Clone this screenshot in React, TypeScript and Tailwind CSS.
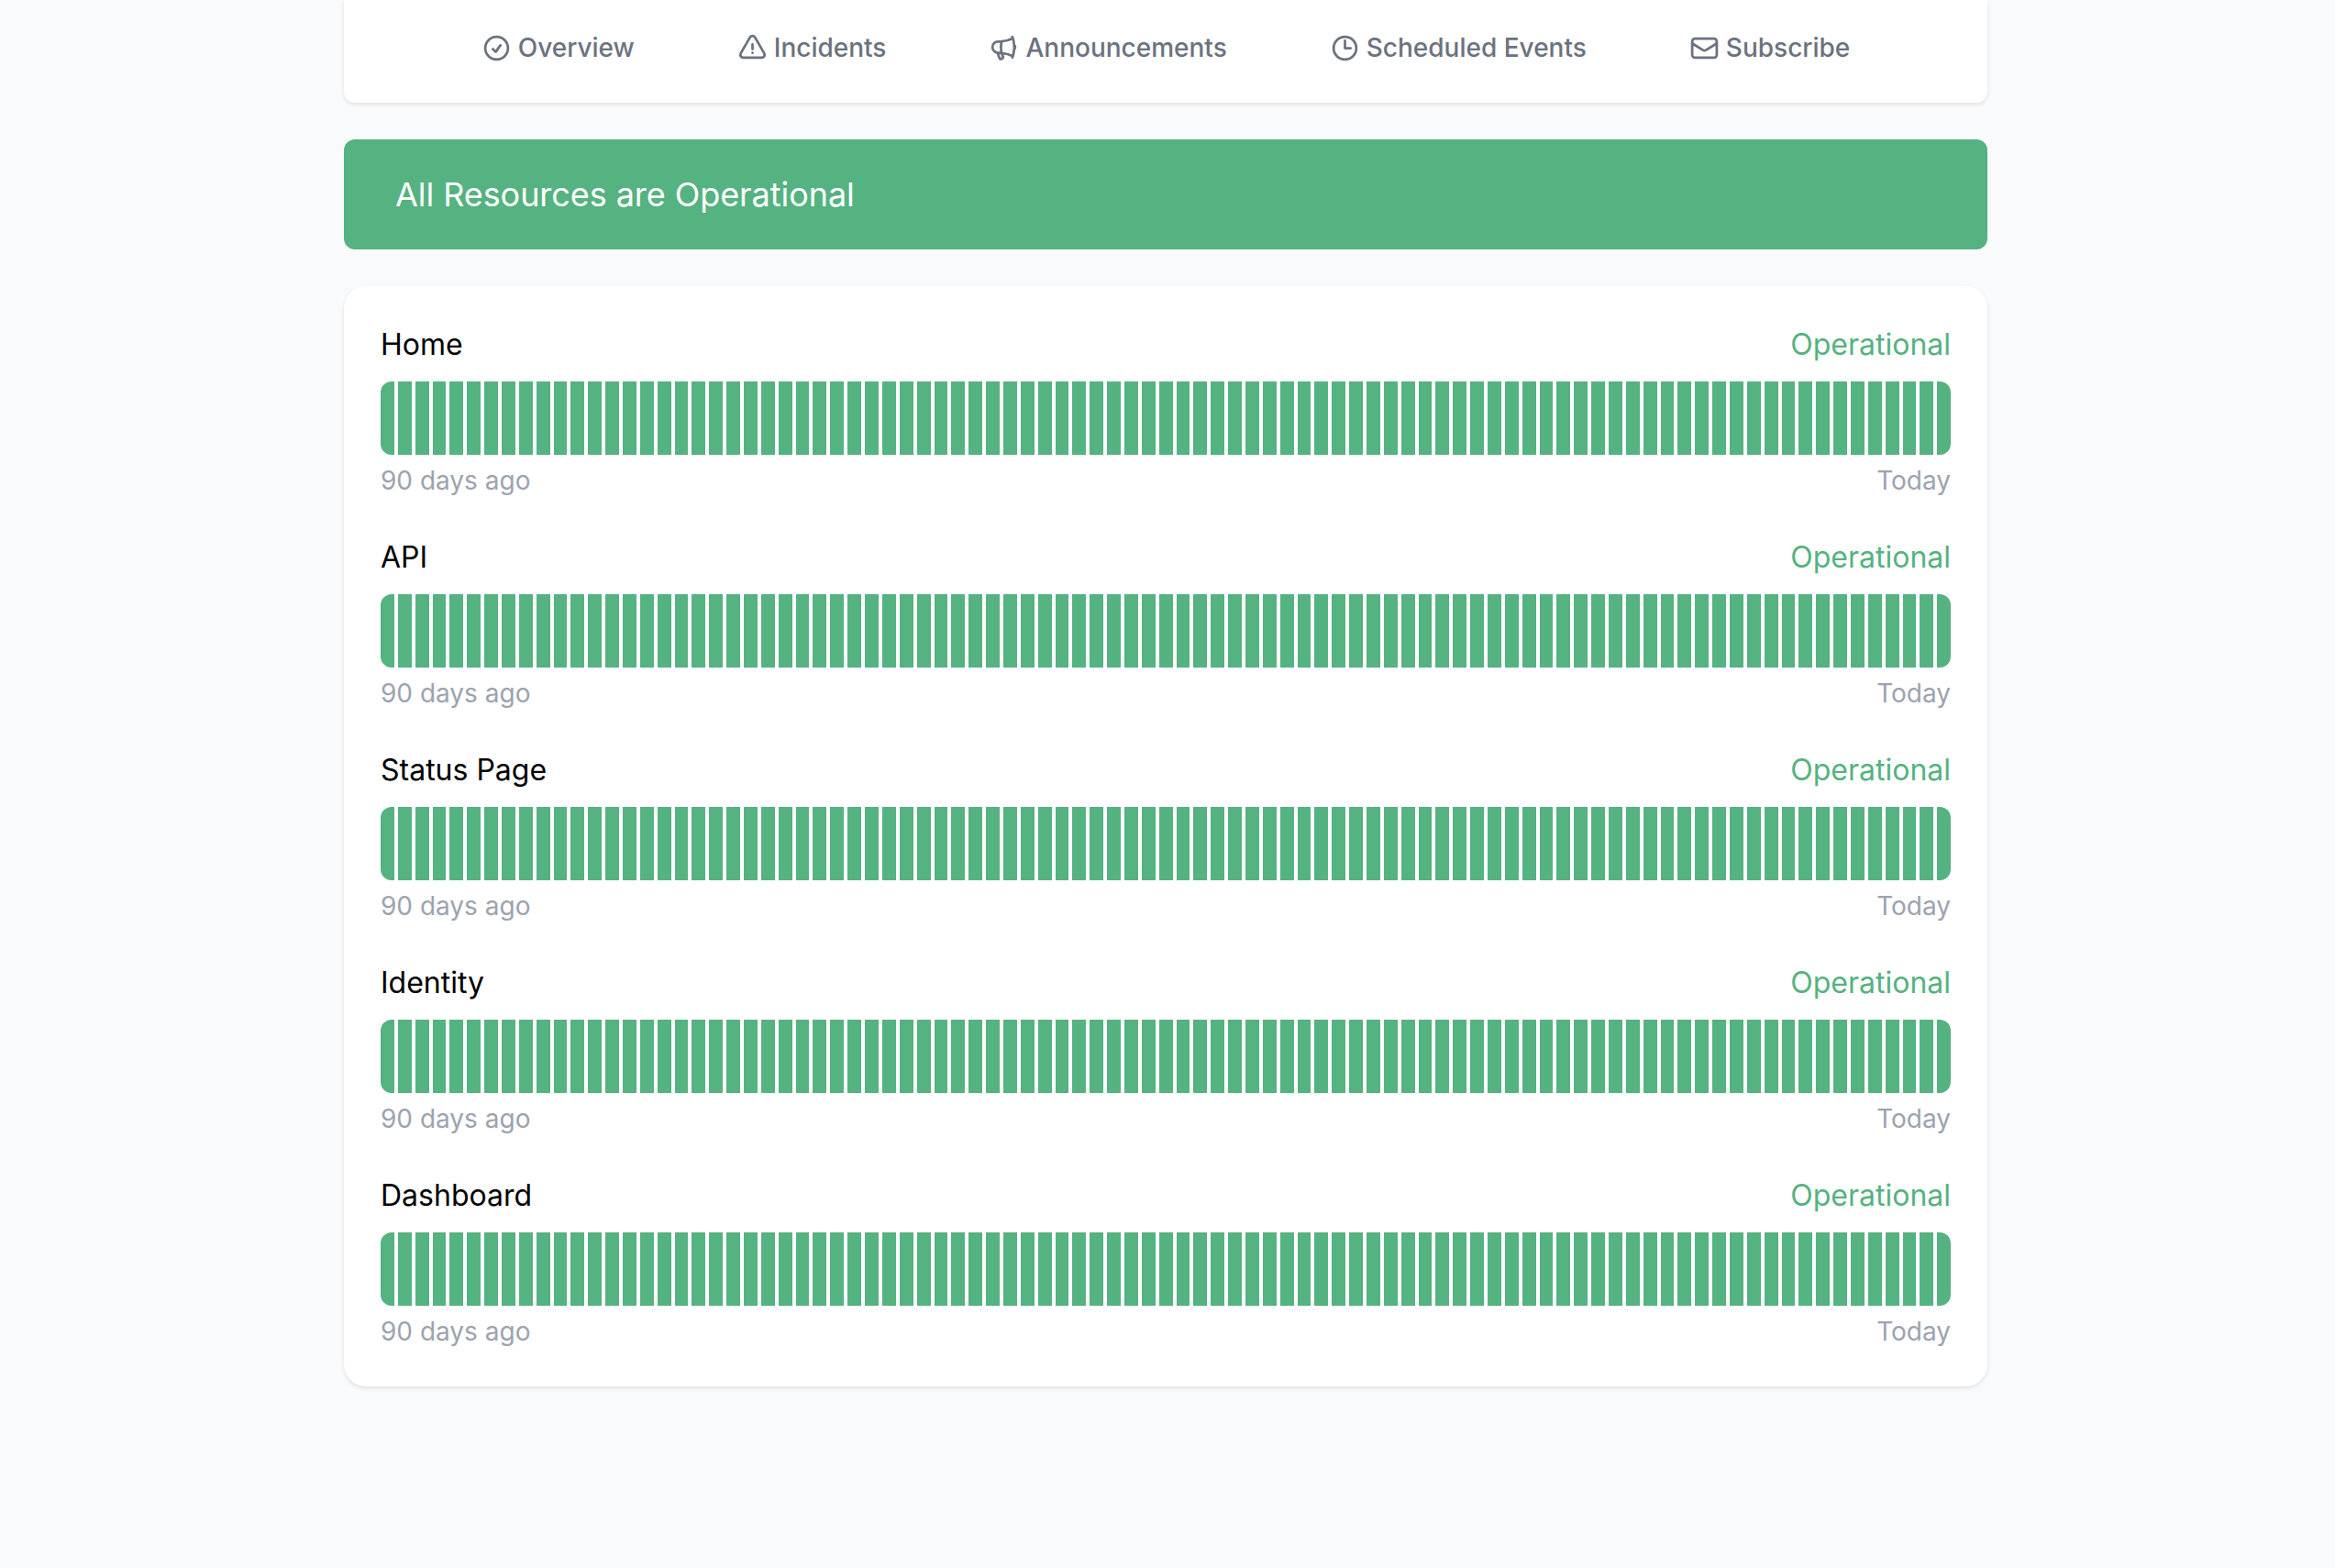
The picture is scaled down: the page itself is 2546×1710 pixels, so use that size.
import React from "react";
import {
  HiOutlineCheckCircle,
  HiOutlineExclamationTriangle,
  HiOutlineMegaphone,
  HiOutlineClock,
  HiOutlineEnvelope,
} from "react-icons/hi2";

const nav = [
  { label: "Overview", Icon: HiOutlineCheckCircle },
  { label: "Incidents", Icon: HiOutlineExclamationTriangle },
  { label: "Announcements", Icon: HiOutlineMegaphone },
  { label: "Scheduled Events", Icon: HiOutlineClock },
  { label: "Subscribe", Icon: HiOutlineEnvelope },
];

const resources = ["Home", "API", "Status Page", "Identity", "Dashboard"];
const days = Array.from({ length: 91 }, (_, i) => i);

export default function App() {
  return (
    <div className="min-h-screen bg-[#f9fafb] pr-[4px] font-['Inter',sans-serif]">
      <div className="mx-auto flex w-[1792px] flex-col gap-[40px]">
        <nav className="flex justify-center gap-[112px] rounded-b-[12px] bg-white pt-[32px] pb-[40px] shadow-[0_2px_4px_rgba(0,0,0,0.1)]">
          {nav.map(({ label, Icon }) => (
            <a
              key={label}
              className="flex items-center gap-[7px] text-[28px] leading-[40px] font-medium text-[#6b7280]"
            >
              <Icon className="h-[33px] w-[33px]" strokeWidth={2} />
              {label}
            </a>
          ))}
        </nav>
        <div className="rounded-[12px] bg-[#55b281] px-[56px] py-[32px] text-[36px] leading-[56px] tracking-[-0.06px] text-white">
          All Resources are Operational
        </div>
        <div className="flex flex-col gap-[40px] rounded-[24px] bg-white p-[40px] shadow-[0_2px_4px_rgba(0,0,0,0.1)]">
          {resources.map((name) => (
            <section key={name}>
              <div className="flex justify-between text-[32px] leading-[48px]">
                <span className="text-black">{name}</span>
                <span className="text-[#55b281]">Operational</span>
              </div>
              <div className="mt-[16px] flex h-[80px] gap-[4px] overflow-hidden rounded-[12px]">
                {days.map((d) => (
                  <div key={d} className="flex-1 bg-[#55b281]" />
                ))}
              </div>
              <div className="mt-[8px] flex justify-between text-[28px] leading-[40px] text-[#9ca3af]">
                <span>90 days ago</span>
                <span>Today</span>
              </div>
            </section>
          ))}
        </div>
      </div>
    </div>
  );
}
